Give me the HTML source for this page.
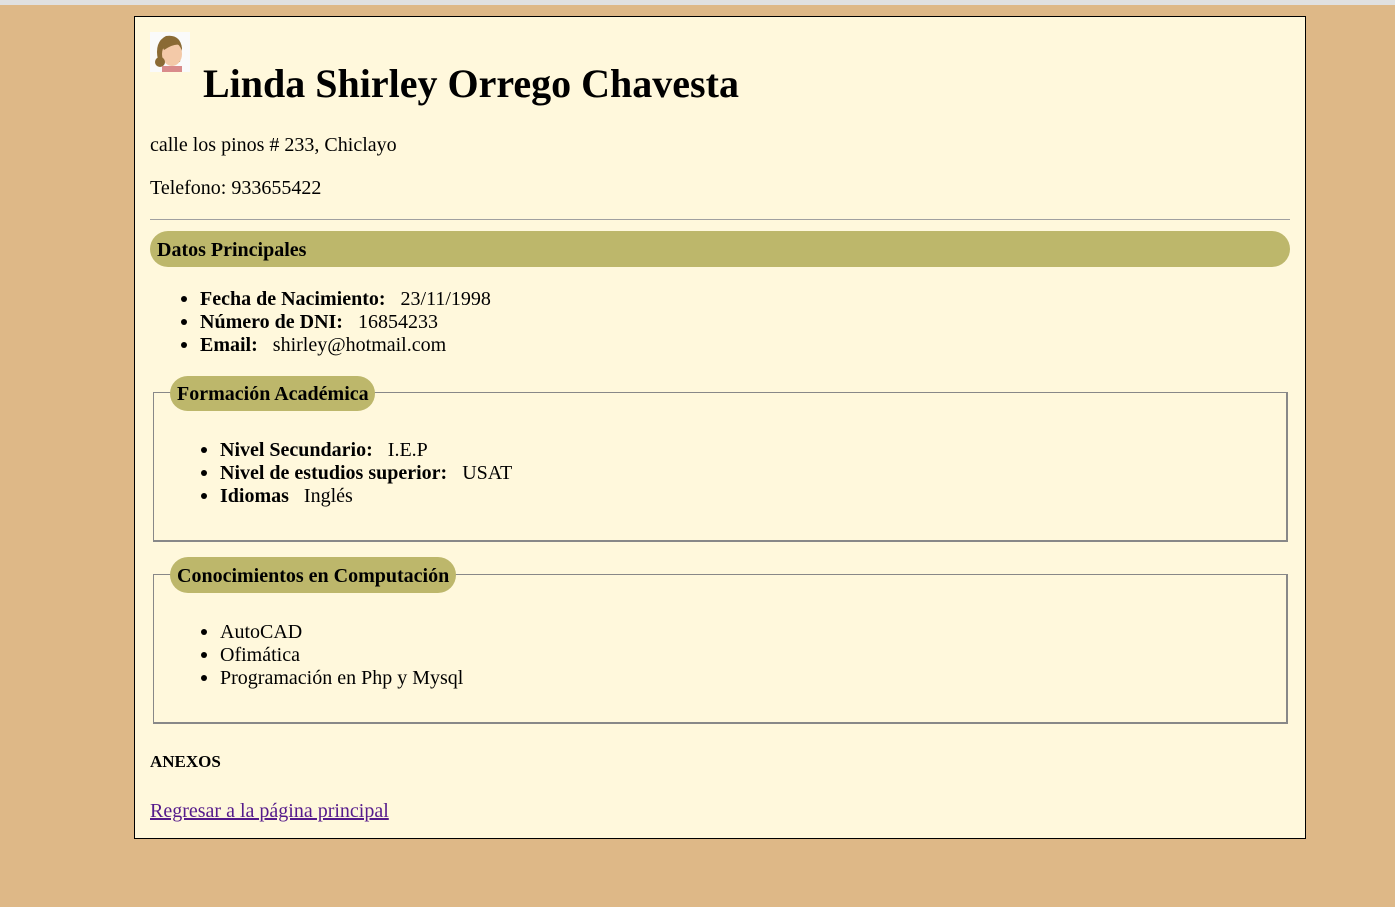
<!DOCTYPE html>
<html><head><meta charset="utf-8"><style>
*{margin:0;padding:0;box-sizing:border-box}
body{width:1395px;height:907px;background:#DEB887;font-family:"Liberation Serif",serif;font-size:20px;color:#000;position:relative;overflow:hidden}
.top{position:absolute;left:0;top:0;width:1395px;height:5px;background:#e0e0e0}
.card{position:absolute;left:134px;top:16px;width:1172px;height:823px;background:#FFF8DC;border:1px solid #000}
.a{position:absolute;white-space:nowrap}
.b{font-weight:bold}
.bar{position:absolute;background:#BDB76B;border-radius:18px;font-weight:bold;padding-left:7px}
.fs{position:absolute;left:153px;width:1135px;border:1px solid #888;border-width:1px 2px 2px 1px}
.dot{position:absolute;width:6px;height:6px;border-radius:50%;background:#000}
a{color:#551A8B}
</style></head><body>
<div class="top"></div>
<div class="card"></div>
<svg class="a" style="left:150px;top:32px" width="40" height="40" viewBox="0 0 40 40">
<rect width="40" height="40" fill="#fafafa"/>
<path d="M8 28 Q4 10 16 4 Q30 2 32 16 L30 30 Z" fill="#8a6a35"/>
<ellipse cx="22" cy="22" rx="10" ry="12" fill="#f3c9a8"/>
<path d="M12 14 Q20 4 32 14 Q26 10 14 18 Z" fill="#8a6a35"/>
<circle cx="10" cy="30" r="5" fill="#8a6a35"/>
<rect x="12" y="34" width="20" height="6" fill="#d98b8b"/>
</svg>
<div class="a b" style="left:203px;top:61px;font-size:40px;line-height:46px">Linda Shirley Orrego Chavesta</div>
<div class="a" style="left:150px;top:133px;line-height:24px">calle los pinos # 233, Chiclayo</div>
<div class="a" style="left:150px;top:176px;line-height:24px">Telefono: 933655422</div>
<div class="a" style="left:150px;top:219px;width:1140px;height:1px;background:#a0a0a0"></div>
<div class="bar" style="left:150px;top:231px;width:1140px;height:36px;line-height:38px">Datos Principales</div>
<div class="dot" style="left:181px;top:296px"></div><div class="a" style="left:200px;top:288px;line-height:23px"><b>Fecha de Nacimiento:</b> &nbsp; 23/11/1998</div>
<div class="dot" style="left:181px;top:319px"></div><div class="a" style="left:200px;top:311px;line-height:23px"><b>Número de DNI:</b> &nbsp; 16854233</div>
<div class="dot" style="left:181px;top:342px"></div><div class="a" style="left:200px;top:334px;line-height:23px"><b>Email:</b> &nbsp; shirley@hotmail.com</div>

<div class="fs" style="top:392px;height:150px"></div>
<div class="bar" style="left:170px;top:376px;width:205px;height:35px;line-height:37px">Formación Académica</div>
<div class="dot" style="left:201px;top:447px"></div><div class="a" style="left:220px;top:439px;line-height:23px"><b>Nivel Secundario:</b> &nbsp; I.E.P</div>
<div class="dot" style="left:201px;top:470px"></div><div class="a" style="left:220px;top:462px;line-height:23px"><b>Nivel de estudios superior:</b> &nbsp; USAT</div>
<div class="dot" style="left:201px;top:493px"></div><div class="a" style="left:220px;top:485px;line-height:23px"><b>Idiomas</b> &nbsp; Inglés</div>

<div class="fs" style="top:574px;height:150px"></div>
<div class="bar" style="left:170px;top:557px;width:286px;height:36px;line-height:38px">Conocimientos en Computación</div>
<div class="dot" style="left:201px;top:629px"></div><div class="a" style="left:220px;top:621px;line-height:23px">AutoCAD</div>
<div class="dot" style="left:201px;top:652px"></div><div class="a" style="left:220px;top:644px;line-height:23px">Ofimática</div>
<div class="dot" style="left:201px;top:675px"></div><div class="a" style="left:220px;top:667px;line-height:23px">Programación en Php y Mysql</div>

<div class="a b" style="left:150px;top:752px;font-size:17px;line-height:20px">ANEXOS</div>
<div class="a" style="left:150px;top:799px;line-height:24px"><a href="#">Regresar a la página principal</a></div>
</body></html>
